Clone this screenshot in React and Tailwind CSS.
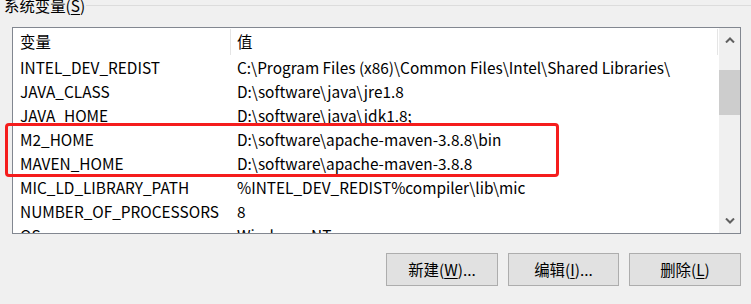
import React from "react";

const rows = [
  ["INTEL_DEV_REDIST", "C:\\Program Files (x86)\\Common Files\\Intel\\Shared Libraries\\"],
  ["JAVA_CLASS", "D:\\software\\java\\jre1.8"],
  ["JAVA_HOME", "D:\\software\\java\\jdk1.8;"],
  ["M2_HOME", "D:\\software\\apache-maven-3.8.8\\bin"],
  ["MAVEN_HOME", "D:\\software\\apache-maven-3.8.8"],
  ["MIC_LD_LIBRARY_PATH", "%INTEL_DEV_REDIST%compiler\\lib\\mic"],
  ["NUMBER_OF_PROCESSORS", "8"],
  ["OS", "Windows_NT"],
];

function Chevron({ up }) {
  return (
    <svg width="10" height="6" viewBox="0 0 10 6">
      <polyline
        points={up ? "1,5.5 5,1.5 9,5.5" : "1,0.5 5,4.5 9,0.5"}
        fill="none"
        stroke="#606060"
        strokeWidth="2"
      />
    </svg>
  );
}

export default function App() {
  return (
    <div
      className="w-[751px] h-[304px] bg-[#f0f0f0] overflow-hidden relative text-black text-[15.4px]"
      style={{ fontFamily: '"Noto Sans CJK SC", "Liberation Sans", sans-serif' }}
    >
      <div className="flex items-center h-[20px] mt-[-5px] pl-[4px] leading-[20px]">
        <span className="whitespace-nowrap">
          系统变量(<span className="underline underline-offset-2">S</span>)
        </span>
        <div className="flex-1 h-px bg-[#dcdcdc] ml-[1px]" />
      </div>

      <div className="ml-[12px] mt-[12px] w-[729px] h-[207px] border border-[#828790] bg-white flex overflow-hidden">
        <div className="flex-1 flex flex-col overflow-hidden">
          <div className="h-[28px] flex items-center shrink-0">
            <div className="w-[217px] pl-[7px]">变量</div>
            <div className="w-px h-[26px] bg-[#e5e5e5]" />
            <div className="flex-1 pl-[6px]">值</div>
            <div className="w-px h-[26px] bg-[#e5e5e5]" />
            <div className="w-px" />
          </div>
          {rows.map(([k, v]) => (
            <div key={k} className="h-[24px] flex items-center shrink-0 whitespace-nowrap">
              <div className="w-[218px] pl-[7px]">{k}</div>
              <div className="flex-1 pl-[6px]">{v}</div>
            </div>
          ))}
        </div>
        <div className="w-[21px] bg-[#f0f0f0] flex flex-col">
          <div className="h-[24px] flex items-center justify-center">
            <Chevron up />
          </div>
          <div className="mt-[18px] h-[45px] bg-[#cdcdcd]" />
          <div className="flex-1" />
          <div className="h-[24px] flex items-center justify-center">
            <Chevron />
          </div>
        </div>
      </div>

      <div className="mt-[19px] flex justify-end gap-[10px] pr-[10px]">
        <button className="w-[112px] h-[33px] bg-[#e1e1e1] border border-[#adadad] flex items-center justify-center">
          新建(<span className="underline underline-offset-2">W</span>)...
        </button>
        <button className="w-[111px] h-[33px] bg-[#e1e1e1] border border-[#adadad] flex items-center justify-center">
          编辑(<span className="underline underline-offset-2">I</span>)...
        </button>
        <button className="w-[112px] h-[33px] bg-[#e1e1e1] border border-[#adadad] flex items-center justify-center">
          删除(<span className="underline underline-offset-2">L</span>)
        </button>
      </div>

      <div className="absolute left-[5px] top-[123px] w-[554px] h-[54px] border-[3px] border-[#f51d1d] rounded-[4px]" />
    </div>
  );
}
